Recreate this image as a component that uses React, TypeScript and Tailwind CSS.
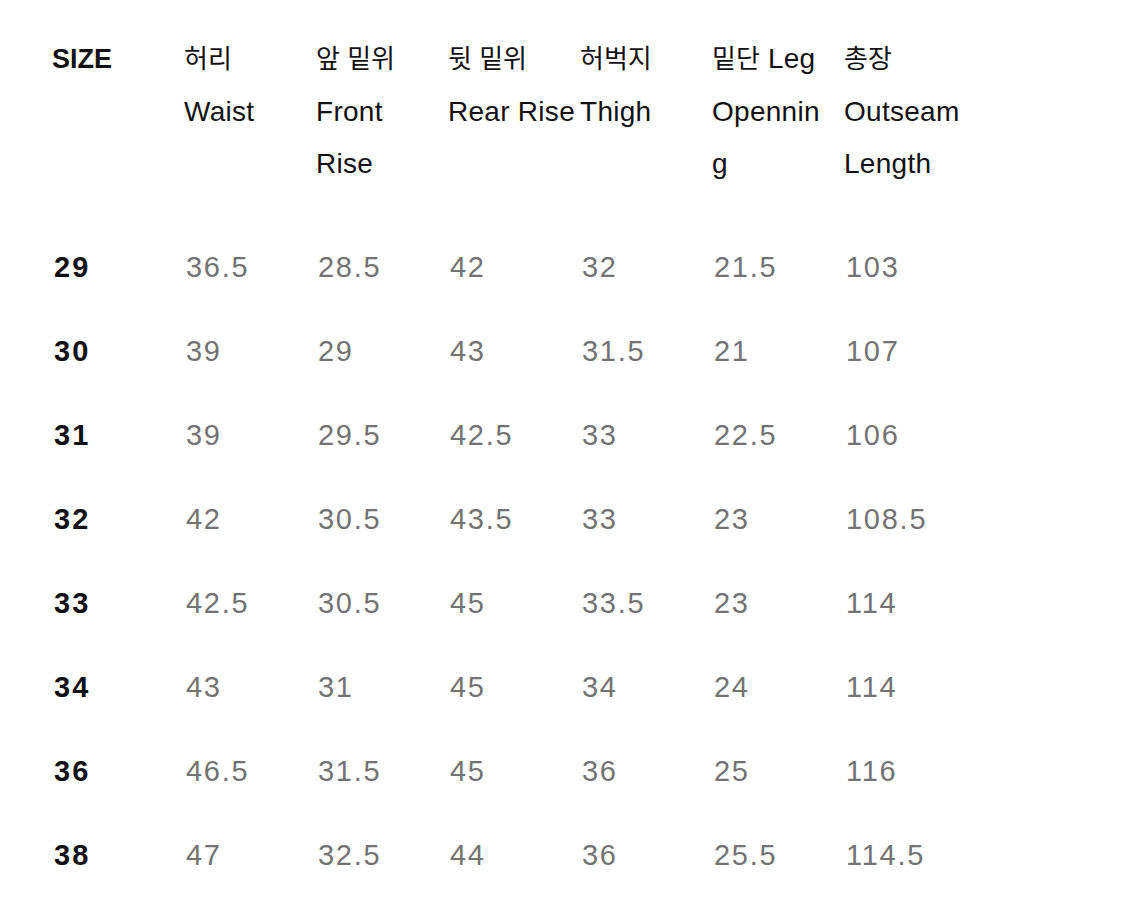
const HEADERS: string[][] = [
  ["SIZE"],
  ["허리", "Waist"],
  ["앞 밑위", "Front", "Rise"],
  ["뒷 밑위", "Rear Rise"],
  ["허벅지", "Thigh"],
  ["밑단 Leg", "Opennin", "g"],
  ["총장", "Outseam", "Length"],
];

const ROWS: [string, string, string, string, string, string, string][] = [
  ["29", "36.5", "28.5", "42", "32", "21.5", "103"],
  ["30", "39", "29", "43", "31.5", "21", "107"],
  ["31", "39", "29.5", "42.5", "33", "22.5", "106"],
  ["32", "42", "30.5", "43.5", "33", "23", "108.5"],
  ["33", "42.5", "30.5", "45", "33.5", "23", "114"],
  ["34", "43", "31", "45", "34", "24", "114"],
  ["36", "46.5", "31.5", "45", "36", "25", "116"],
  ["38", "47", "32.5", "44", "36", "25.5", "114.5"],
];

export default function App() {
  return (
    <div
      className="min-h-[917px] w-[1125px] bg-white pl-[52px] pt-[33px]"
      style={{ fontFamily: '"Liberation Sans", "Noto Sans CJK KR", sans-serif' }}
    >
      <div className="grid grid-cols-[132px_132px_132px_132px_132px_132px_132px]">
        {HEADERS.map((lines, i) => (
          <div
            key={i}
            className={
              i === 0
                ? "text-[27px] font-bold leading-[52.5px] text-[#111]"
                : "whitespace-nowrap text-[28px] leading-[52.5px] tracking-[0.01em] text-[#111]"
            }
          >
            {lines.map((l) => (
              <div key={l}>
                {l.split(/( ?[A-Za-z][A-Za-z ]*)/).map((part, j) =>
                  /[가-힣]/.test(part) ? (
                    <span key={j} className="text-[26px] tracking-normal">
                      {part}
                    </span>
                  ) : (
                    <span key={j}>{part}</span>
                  ),
                )}
              </div>
            ))}
          </div>
        ))}
      </div>
      <div className="mt-[35px]">
        {ROWS.map((row) => (
          <div key={row[0]} className="grid h-[84px] grid-cols-[132px_132px_132px_132px_132px_132px_132px] items-center">
            {row.map((v, i) => (
              <div
                key={i}
                className={
                  i === 0
                    ? "pl-[2px] text-[29px] font-bold tracking-[0.07em] text-[#111]"
                    : "pl-[2px] text-[29px] tracking-[0.06em] text-[#737373]"
                }
              >
                {v}
              </div>
            ))}
          </div>
        ))}
      </div>
    </div>
  );
}
